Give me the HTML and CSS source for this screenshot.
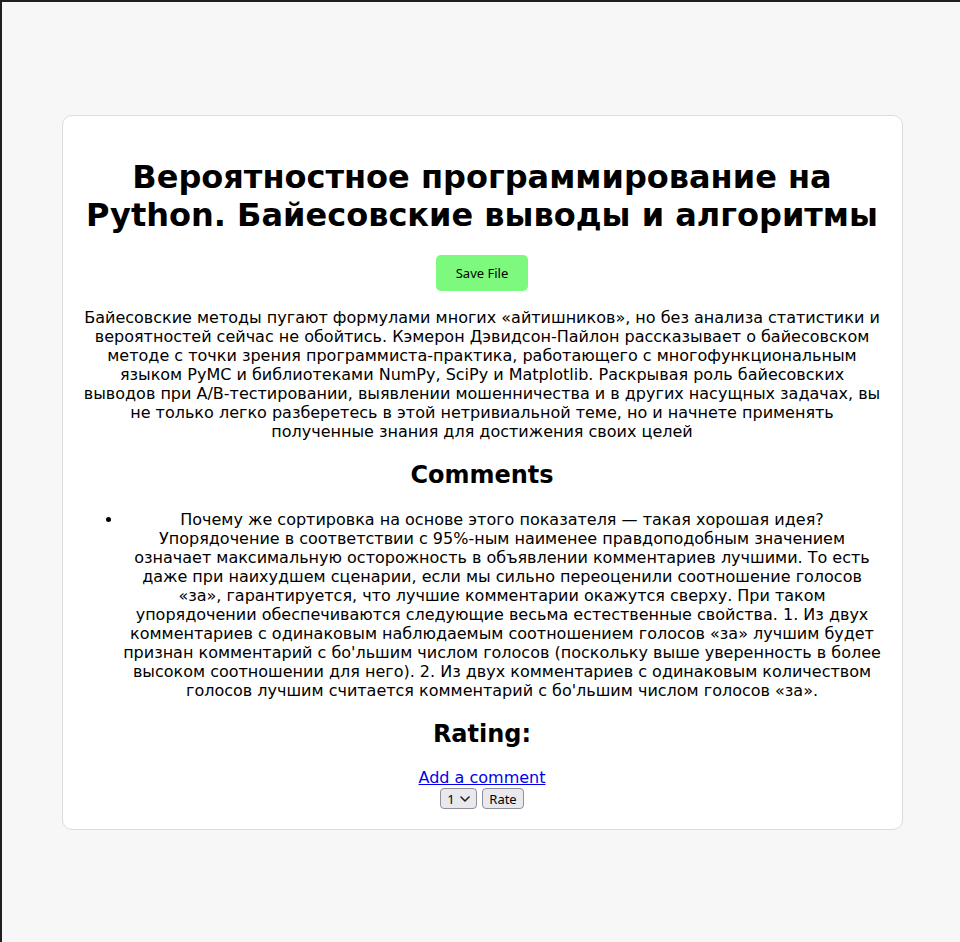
FILE: index.html
```html
<!DOCTYPE html>
<html lang="ru">
<head>
<meta charset="utf-8">
<title>Вероятностное программирование на Python</title>
<link rel="stylesheet" href="styles.css">
</head>
<body>
<main class="card">
  <h1 class="title">Вероятностное программирование на Python. Байесовские выводы и алгоритмы</h1>
  <div class="actions"><button class="save-btn" type="button">Save File</button></div>
  <p class="description">Байесовские методы пугают формулами многих «айтишников», но без анализа статистики и вероятностей сейчас не обойтись. Кэмерон Дэвидсон-Пайлон рассказывает о байесовском методе с точки зрения программиста-практика, работающего с многофункциональным языком PyMC и библиотеками NumPy, SciPy и Matplotlib. Раскрывая роль байесовских выводов при А/В-тестировании, выявлении мошенничества и в других насущных задачах, вы не только легко разберетесь в этой нетривиальной теме, но и начнете применять полученные знания для достижения своих целей</p>
  <h2 class="section-title">Comments</h2>
  <ul class="comments">
    <li class="comment">Почему же сортировка на основе этого показателя — такая хорошая идея? Упорядочение в соответствии с 95%-ным наименее правдоподобным значением означает максимальную осторожность в объявлении комментариев лучшими. То есть даже при наихудшем сценарии, если мы сильно переоценили соотношение голосов «за», гарантируется, что лучшие комментарии окажутся сверху. При таком упорядочении обеспечиваются следующие весьма естественные свойства. 1. Из двух комментариев с одинаковым наблюдаемым соотношением голосов «за» лучшим будет признан комментарий с бо'льшим числом голосов (поскольку выше уверенность в более высоком соотношении для него). 2. Из двух комментариев с одинаковым количеством голосов лучшим считается комментарий с бо'льшим числом голосов «за».</li>
  </ul>
  <h2 class="section-title">Rating:</h2>
  <div class="add-link"><a href="#">Add a comment</a></div>
  <form class="rate-form">
    <span class="select-wrap">
      <select class="rate-select">
        <option>1</option>
        <option>2</option>
        <option>3</option>
        <option>4</option>
        <option>5</option>
      </select>
      <svg class="chevron" width="10" height="6" viewBox="0 0 10 6" aria-hidden="true"><path d="M1 1 L5 5 L9 1" fill="none" stroke="#222" stroke-width="1.6" stroke-linecap="round" stroke-linejoin="round"/></svg>
    </span>
    <button class="rate-btn" type="button">Rate</button>
  </form>
</main>
</body>
</html>
```

FILE: styles.css
```css
html {
  background: #f7f7f7;
}

body {
  margin: 0;
  box-sizing: border-box;
  min-height: 100vh;
  border-top: 2px solid #1f1f23;
  border-left: 2px solid #1f1f23;
  padding-left: 2px;
  padding-top: 1px;
  background: #f7f7f7;
  display: flex;
  align-items: center;
  justify-content: center;
  font-family: "DejaVu Sans", sans-serif;
  color: #000;
}

.card {
  box-sizing: border-box;
  width: 841px;
  background: #fff;
  border: 1px solid #dcdcdc;
  border-radius: 10px;
  padding: 20px;
  text-align: center;
}

.title {
  font-size: 32px;
  font-weight: bold;
  margin: 22px 0 21px;
}

.actions {
  margin: 0;
}

.save-btn {
  background: #7dfa7d;
  border: none;
  border-radius: 5px;
  padding: 0 20px;
  height: 36px;
  font-family: "Noto Sans", sans-serif;
  font-size: 13px;
  color: #000;
}

.description {
  font-size: 16px;
  margin: 17px 0 16px;
}

.section-title {
  font-size: 24px;
  font-weight: bold;
  margin: 20px 0;
}

.comments {
  margin: 21px 0 0;
  padding-left: 40px;
}

.comment {
  font-size: 16px;
}

.add-link {
  font-size: 16px;
}

.add-link a {
  color: #0000ee;
}

.rate-form {
  margin: 1px 0 0;
  height: 21px;
  display: flex;
  justify-content: center;
  align-items: center;
  gap: 5px;
}

.select-wrap {
  position: relative;
  display: inline-flex;
}

.rate-select {
  appearance: none;
  -webkit-appearance: none;
  box-sizing: border-box;
  width: 37px;
  height: 21px;
  padding: 0 0 0 6px;
  border: 1px solid #8f8f9d;
  border-radius: 4px;
  background: #e9e9ed;
  font-family: "Noto Sans", sans-serif;
  font-size: 13px;
  color: #000;
}

.chevron {
  position: absolute;
  right: 7px;
  top: 8px;
  pointer-events: none;
}

.rate-btn {
  box-sizing: border-box;
  height: 21px;
  padding: 0 6px;
  border: 1px solid #8f8f9d;
  border-radius: 4px;
  background: #e9e9ed;
  font-family: "Noto Sans", sans-serif;
  font-size: 13px;
  color: #000;
}
```
